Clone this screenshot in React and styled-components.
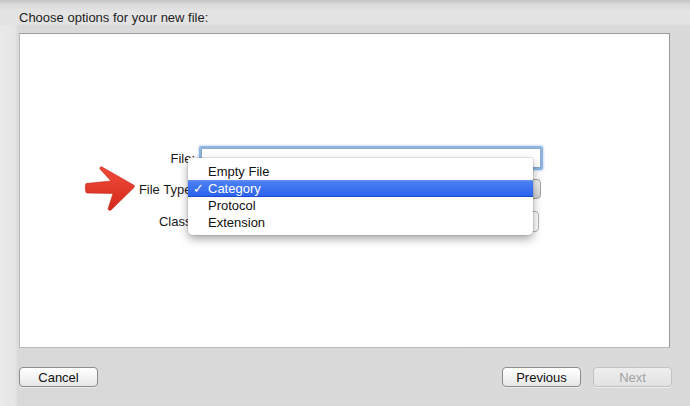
import React from "react";
import styled, { createGlobalStyle } from "styled-components";

const Global = createGlobalStyle`
  html, body { margin: 0; padding: 0; }
  body {
    width: 690px; height: 406px; overflow: hidden;
    font-family: "Liberation Sans", Arial, sans-serif;
  }
`;

const Window = styled.div`
  width: 690px;
  height: 406px;
  display: flex;
  flex-direction: column;
  background:
    linear-gradient(to right, #e9e9e9 0, #e6e6e6 15px, #d9d9d9 18px, #dadada 100%);
`;

const Header = styled.div`
  height: 33px;
  box-sizing: border-box;
  padding: 10px 0 0 19px;
  font-size: 13px;
  color: #1e1e1e;
  background: linear-gradient(to bottom, #c4c4c4 0, #dcdcdc 5px, #e4e4e4 12px, #e2e2e2 24px, rgba(226,226,226,0) 26px);
`;

const Panel = styled.div`
  margin-left: 19px;
  width: 651px;
  height: 315px;
  box-sizing: border-box;
  background: #fff;
  border: 1px solid #b9b9b9;
  border-top-color: #9d9d9d;
  border-right-color: #9a9a9a;
  padding-top: 113px;
`;

const Form = styled.div`
  display: flex;
  flex-direction: column;
`;

const Row = styled.div`
  display: flex;
  align-items: center;
  height: ${(p) => p.$h}px;
  margin-top: ${(p) => p.$mt || 0}px;
  position: relative;
`;

const LabelCell = styled.div`
  width: 175px;
  display: flex;
  justify-content: flex-end;
  align-items: center;
  gap: 4px;
  margin-right: 4px;
  font-size: 13px;
  color: #1a1a1a;
`;

const TextField = styled.div`
  width: 338px;
  height: 18px;
  margin-left: 2px;
  border: 1px solid #8fa8c6;
  background: #fff;
  box-shadow: 0 0 0 2px #8db5e3, 0 0 2px 3px rgba(120,160,220,0.35);
  border-radius: 1px;
`;

const PopUp = styled.div`
  width: 340px;
  height: 18px;
  border: 1px solid #a3a3a3;
  border-radius: 4px;
  background: linear-gradient(to bottom, #f2f2f2, #d2d2d2);
`;

const Combo = styled.div`
  width: 338px;
  height: 19px;
  border: 1px solid #b4b4b4;
  border-radius: 4px;
  background: #fff;
`;

const Menu = styled.div`
  position: absolute;
  left: 168px;
  top: -21px;
  width: 345px;
  box-sizing: border-box;
  padding: 5px 0 4px;
  background: rgba(255,255,255,0.98);
  border-radius: 2px 2px 5px 5px;
  box-shadow: 0 4px 10px rgba(0,0,0,0.35), 0 0 0 1px rgba(0,0,0,0.08);
  z-index: 2;
`;

const Item = styled.div`
  position: relative;
  height: 17px;
  line-height: 17px;
  padding-left: 20px;
  font-size: 13px;
  color: ${(p) => (p.$active ? "#fff" : "#111")};
  background: ${(p) =>
    p.$active ? "linear-gradient(to bottom, #6a95f3 0, #4a7ef2 2px, #2c62ee 100%)" : "transparent"};
  border-bottom: ${(p) => (p.$active ? "1px solid #1a4ad0" : "0")};
  box-sizing: border-box;
`;

const Check = styled.span`
  position: absolute;
  left: 5px;
  top: 0;
  font-family: "DejaVu Sans", sans-serif;
  font-size: 13px;
  font-weight: bold;
`;

const Footer = styled.div`
  flex: 1;
  display: flex;
  justify-content: space-between;
  align-items: flex-start;
  padding: 19px 18px 0 19px;
`;

const Group = styled.div`
  display: flex;
  gap: 12px;
`;

const Button = styled.div`
  width: 79px;
  height: 20px;
  box-sizing: border-box;
  border: 1px solid ${(p) => (p.$disabled ? "#c2c2c2" : "#8c8c8c")};
  border-radius: 4px;
  background: ${(p) =>
    p.$disabled
      ? "linear-gradient(to bottom, #eeeeee, #e2e2e2)"
      : "linear-gradient(to bottom, #ffffff 0, #f4f4f4 50%, #e6e6e6 100%)"};
  box-shadow: 0 1px 0 rgba(255,255,255,0.5);
  display: flex;
  align-items: center;
  justify-content: center;
  font-size: 13px;
  color: ${(p) => (p.$disabled ? "#a2a2a2" : "#111")};
`;

const Arrow = () => (
  <svg width="51" height="46" viewBox="0 0 51 46" style={{ margin: "-13px 0" }}>
    <defs>
      <linearGradient id="ag" x1="0" y1="0" x2="0" y2="1">
        <stop offset="0" stopColor="#f0493a" />
        <stop offset="1" stopColor="#d42a1c" />
      </linearGradient>
    </defs>
    <path
      d="M2,17.5 C1,18.5 1,25.5 2.5,27 L29,27.5 L24,43 C24.5,44.5 26,44.5 27,44 L50,21.5 C50.5,20.5 50.5,19.5 49.5,19 L18,1 C16.5,0.5 15.5,1.5 16,3 L27,15 Z"
      fill="url(#ag)"
      stroke="#c0261a"
      strokeWidth="0.6"
    />
  </svg>
);

export default function App() {
  return (
    <>
      <Global />
      <Window>
        <Header>Choose options for your new file:</Header>
        <Panel>
          <Form>
            <Row $h={22}>
              <LabelCell>File:</LabelCell>
              <TextField />
            </Row>
            <Row $h={20} $mt={10}>
              <LabelCell>
                <Arrow />
                File Type:
              </LabelCell>
              <PopUp />
              <Menu>
                <Item>Empty File</Item>
                <Item $active>
                  <Check>✓</Check>Category
                </Item>
                <Item>Protocol</Item>
                <Item>Extension</Item>
              </Menu>
            </Row>
            <Row $h={21} $mt={12}>
              <LabelCell>Class:</LabelCell>
              <Combo />
            </Row>
          </Form>
        </Panel>
        <Footer>
          <Button>Cancel</Button>
          <Group>
            <Button>Previous</Button>
            <Button $disabled>Next</Button>
          </Group>
        </Footer>
      </Window>
    </>
  );
}
